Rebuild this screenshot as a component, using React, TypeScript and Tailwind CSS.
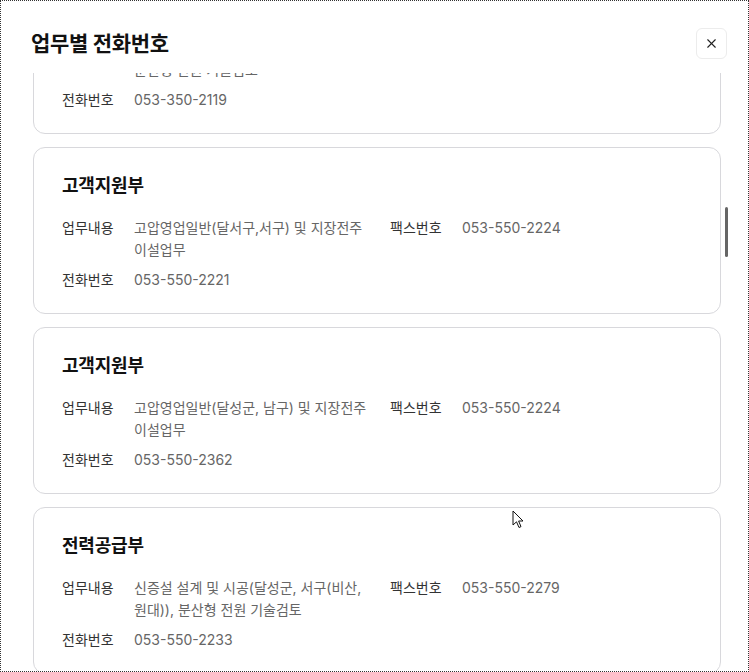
import { X } from "lucide-react";

type Dept = {
  name: string;
  task: string;
  fax: string;
  phone: string;
};

const departments: Dept[] = [
  {
    name: "전력공급부",
    task: "신증설 설계 및 시공(경산시, 청도군), 분산형 전원 기술검토",
    fax: "053-350-2129",
    phone: "053-350-2119",
  },
  {
    name: "고객지원부",
    task: "고압영업일반(달서구,서구) 및 지장전주 이설업무",
    fax: "053-550-2224",
    phone: "053-550-2221",
  },
  {
    name: "고객지원부",
    task: "고압영업일반(달성군, 남구) 및 지장전주 이설업무",
    fax: "053-550-2224",
    phone: "053-550-2362",
  },
  {
    name: "전력공급부",
    task: "신증설 설계 및 시공(달성군, 서구(비산, 원대)), 분산형 전원 기술검토",
    fax: "053-550-2279",
    phone: "053-550-2233",
  },
];

function DeptCard({ dept }: { dept: Dept }) {
  return (
    <div className="rounded-[12px] border border-[#d8d8dc] bg-white px-[28px] pt-[26px] pb-[22px]">
      <h3 className="text-[18px] leading-[24px] font-bold tracking-[-0.2px] text-[#111]">
        {dept.name}
      </h3>
      <div className="mt-[19px] grid grid-cols-[72px_256px_72px_1fr] text-[14px] leading-[22px]">
        <span className="text-[#333]">업무내용</span>
        <span className="break-keep text-[#666]">{dept.task}</span>
        <span className="text-[#333]">팩스번호</span>
        <span className="text-[#666]">{dept.fax}</span>
      </div>
      <div className="mt-[8px] grid grid-cols-[72px_1fr] text-[14px] leading-[22px]">
        <span className="text-[#333]">전화번호</span>
        <span className="text-[#666]">{dept.phone}</span>
      </div>
    </div>
  );
}

export default function App() {
  return (
    <div className="relative flex h-[672px] w-[749px] flex-col overflow-hidden border border-dotted border-[#333] bg-white font-['Inter','Noto_Sans_CJK_KR',sans-serif]">
      <header className="flex items-center justify-between pt-[27px] pb-[14px] pl-[30px] pr-[21px]">
        <h2 className="text-[21px] leading-[28px] font-bold tracking-[-0.3px] text-[#111]">
          업무별 전화번호
        </h2>
        <button className="flex h-[31px] w-[31px] items-center justify-center rounded-[6px] border border-[#ececec] bg-white text-[#222]">
          <X size={15} strokeWidth={1.8} />
        </button>
      </header>

      <div className="relative flex-1 overflow-hidden pl-[32px] pr-[27px]">
        <div className="-mt-[106px] flex flex-col gap-[13px]">
          {departments.map((dept, i) => (
            <DeptCard key={i} dept={dept} />
          ))}
        </div>
        <div className="absolute top-[134px] right-[20px] h-[50px] w-[3px] rounded-full bg-[#666]" />
      </div>

      <svg
        className="absolute left-[511px] top-[509px]"
        width="13"
        height="20"
        viewBox="0 0 13 20"
      >
        <path
          d="M1 1 L1 15 L4.5 11.8 L7 17.5 L9 16.6 L6.6 11 L11 11 Z"
          fill="#fff"
          stroke="#111"
          strokeWidth="1"
          strokeLinejoin="round"
        />
      </svg>
    </div>
  );
}
